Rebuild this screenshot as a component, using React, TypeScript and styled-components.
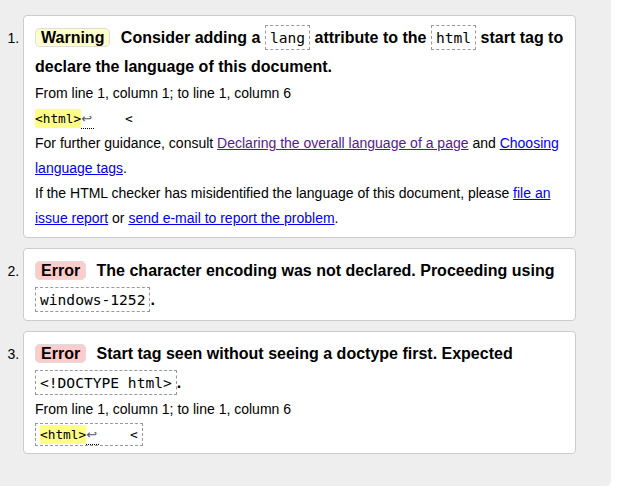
import React from "react";
import styled, { createGlobalStyle, css } from "styled-components";

const Global = createGlobalStyle`
  html, body { margin: 0; padding: 0; background: #fff; }
`;

const Panel = styled.div`
  width: 611px;
  height: 486px;
  box-sizing: border-box;
  background: #eee;
  border-bottom-right-radius: 5px;
  padding: 15px 35px 0 0;
`;

const List = styled.ol`
  margin: 0;
  padding: 0 0 0 23px;
  list-style: decimal outside;
  font-family: "Liberation Sans", Arial, sans-serif;
  font-size: 14px;
  color: #000;
`;

const Card = styled.li`
  background: #fff;
  border: 1px solid #ccc;
  border-radius: 4px;
  padding: 7px 8px 6px 11px;
  margin-bottom: 10px;
`;

const Title = styled.p`
  margin: 0;
  font-size: 16px;
  font-weight: bold;
  line-height: 29px;
`;

const Badge = styled.strong<{ $kind: "warning" | "error" }>`
  font-weight: bold;
  border: 1px solid #ddd;
  border-radius: 5px;
  padding: 0 5px;
  margin-right: 6px;
  background: ${(p) => (p.$kind === "warning" ? "#ffc" : "#fcc")};
`;

const Code = styled.code`
  font-family: "DejaVu Sans Mono", "Liberation Mono", monospace;
  font-size: 14.6px;
  font-weight: normal;
  border: 1px dashed #999;
  padding: 3px 4px;
`;

const Text = styled.p`
  margin: 0;
  font-size: 14px;
  line-height: 25px;
`;

const Extract = styled.code<{ $framed?: boolean }>`
  font-family: "DejaVu Sans Mono", "Liberation Mono", monospace;
  font-size: 12.8px;
  white-space: pre;
  ${(p) =>
    p.$framed &&
    css`
      border: 1px dashed #999;
      padding: 3px 4px;
    `}
`;

const Mark = styled.b`
  font-weight: normal;
  background: #ff8;
  padding: 2px 0;
`;

const LineFeed = styled.span`
  font-family: "DejaVu Sans", sans-serif;
  font-size: 13px;
  color: #556;
  border-bottom: 1px dotted #000;
  padding: 1px 2px 2px 0;
`;

const Link = styled.a<{ $visited?: boolean }>`
  color: ${(p) => (p.$visited ? "#551a8b" : "#00e")};
  text-decoration: underline;
`;

const Snippet: React.FC<{ framed?: boolean }> = ({ framed }) => (
  <Extract $framed={framed}>
    <Mark>&lt;html&gt;</Mark>
    <LineFeed title="Line break">↩</LineFeed>
    {"    <"}
  </Extract>
);

export default function App() {
  return (
    <>
      <Global />
      <Panel>
        <List>
          <Card>
            <Title>
              <Badge $kind="warning">Warning</Badge> Consider adding a <Code>lang</Code> attribute to the{" "}
              <Code>html</Code> start tag to declare the language of this document.
            </Title>
            <Text>From line 1, column 1; to line 1, column 6</Text>
            <Text>
              <Snippet />
            </Text>
            <Text>
              For further guidance, consult{" "}
              <Link $visited href="#">
                Declaring the overall language of a page
              </Link>{" "}
              and <Link href="#">Choosing language tags</Link>.
            </Text>
            <Text>
              If the HTML checker has misidentified the language of this document, please{" "}
              <Link href="#">file an issue report</Link> or{" "}
              <Link href="#">send e-mail to report the problem</Link>.
            </Text>
          </Card>
          <Card>
            <Title>
              <Badge $kind="error">Error</Badge> The character encoding was not declared. Proceeding using{" "}
              <Code>windows-1252</Code>.
            </Title>
          </Card>
          <Card>
            <Title>
              <Badge $kind="error">Error</Badge> Start tag seen without seeing a doctype first. Expected{" "}
              <Code>&lt;!DOCTYPE html&gt;</Code>.
            </Title>
            <Text>From line 1, column 1; to line 1, column 6</Text>
            <Text>
              <Snippet framed />
            </Text>
          </Card>
        </List>
      </Panel>
    </>
  );
}
